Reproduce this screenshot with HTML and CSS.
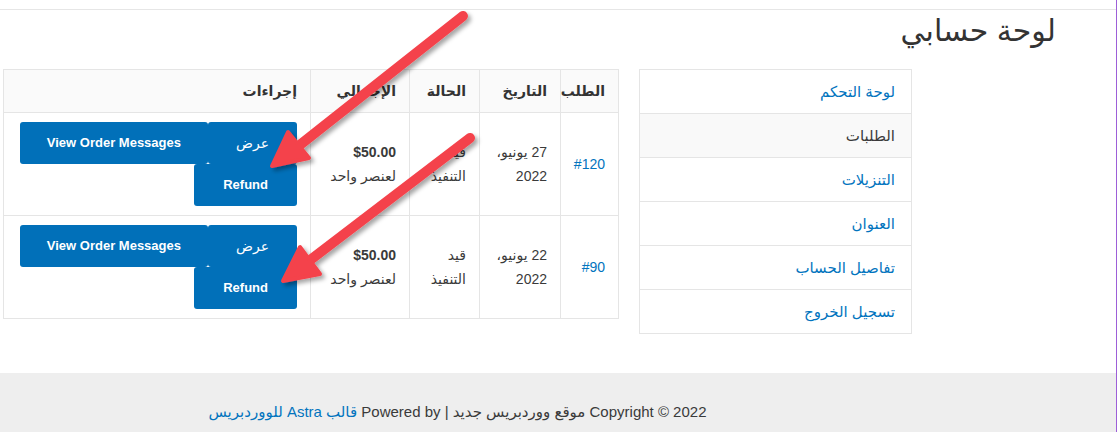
FILE: index.html
```html
<!DOCTYPE html>
<html lang="ar" dir="rtl">
<head>
    <meta charset="UTF-8">
    <meta name="viewport" content="width=device-width, initial-scale=1.0">
    <title>لوحة حسابي</title>
    <link rel="stylesheet" href="styles.css">
</head>
<body>
    <div class="page">
        <header class="site-header"></header>

        <main class="site-content">
            <h1 class="page-title">لوحة حسابي</h1>

            <div class="account">
                <nav class="account-nav">
                    <ul>
                        <li><a href="#">لوحة التحكم</a></li>
                        <li class="is-active"><a href="#">الطلبات</a></li>
                        <li><a href="#">التنزيلات</a></li>
                        <li><a href="#">العنوان</a></li>
                        <li><a href="#">تفاصيل الحساب</a></li>
                        <li><a href="#">تسجيل الخروج</a></li>
                    </ul>
                </nav>

                <div class="account-content">
                    <table class="orders">
                        <thead>
                            <tr>
                                <th class="col-number">الطلب</th>
                                <th class="col-date">التاريخ</th>
                                <th class="col-status">الحالة</th>
                                <th class="col-total">الإجمالي</th>
                                <th class="col-actions">إجراءات</th>
                            </tr>
                        </thead>
                        <tbody>
                            <tr>
                                <td><a href="#">#120</a></td>
                                <td class="nowrap">27 يونيو،<br>2022</td>
                                <td>قيد التنفيذ</td>
                                <td class="nowrap"><strong>$50.00</strong><br>لعنصر واحد</td>
                                <td class="actions">
                                    <div class="actions-wrap">
                                        <a href="#" class="button button-ar">عرض</a>
                                        <a href="#" class="button">View Order Messages</a>
                                        <a href="#" class="button button-refund">Refund</a>
                                    </div>
                                </td>
                            </tr>
                            <tr>
                                <td><a href="#">#90</a></td>
                                <td class="nowrap">22 يونيو،<br>2022</td>
                                <td>قيد التنفيذ</td>
                                <td class="nowrap"><strong>$50.00</strong><br>لعنصر واحد</td>
                                <td class="actions">
                                    <div class="actions-wrap">
                                        <a href="#" class="button button-ar">عرض</a>
                                        <a href="#" class="button">View Order Messages</a>
                                        <a href="#" class="button button-refund">Refund</a>
                                    </div>
                                </td>
                            </tr>
                        </tbody>
                    </table>
                </div>
            </div>
        </main>

        <footer class="site-footer">
            <div class="footer-inner">Copyright © 2022 موقع ووردبريس جديد | Powered by <a href="#">قالب Astra للووردبريس</a></div>
        </footer>

        <!-- annotation arrows drawn over the screenshot -->
        <svg class="arrows" viewBox="0 0 1117 432" width="1117" height="432">
            <defs>
                <filter id="shadow" x="-20%" y="-20%" width="140%" height="140%">
                    <feDropShadow dx="3" dy="3" stdDeviation="2" flood-color="#000" flood-opacity="0.35"/>
                </filter>
            </defs>
            <g class="arrow" filter="url(#shadow)">
                <line x1="463" y1="16" x2="296" y2="148" stroke-width="10"/>
                <polygon points="272,166 309,158 288,132" stroke-width="4"/>
            </g>
            <g class="arrow" filter="url(#shadow)">
                <line x1="470" y1="138" x2="305" y2="264" stroke-width="10"/>
                <polygon points="283,281 320,274 300,247" stroke-width="4"/>
            </g>
        </svg>
    </div>
</body>
</html>
```

FILE: styles.css
```css
* { box-sizing: border-box; }
body { margin: 0; font-family: "Liberation Sans", "DejaVu Sans", sans-serif; font-size: 14px; color: #3a3a3a; background: #fff; }
a { color: #0274be; text-decoration: none; }

.page { position: relative; height: 432px; overflow: hidden; border-right: 1px solid #9d5fd8; }
.site-header { height: 10px; border-bottom: 1px solid #e6e6e6; }
.site-content { padding-bottom: 39px; }
.page-title { margin: 3px 60px 20px 0; font-size: 30px; line-height: 36px; font-weight: normal; color: #333; }

.account { display: flex; gap: 20px; align-items: flex-start; margin: 0 204px 0 3px; }
.account-nav { flex: none; width: 273px; border: 1px solid #e5e5e5; }
.account-nav ul { list-style: none; margin: 0; padding: 0; }
.account-nav li + li { border-top: 1px solid #e5e5e5; }
.account-nav a { display: block; padding: 10px 16px; font-size: 15px; line-height: 23px; }
.account-nav .is-active { background: #f9f9f9; }
.account-nav .is-active a { color: #3a3a3a; }

.account-content { flex: 1; }
.orders { width: 100%; border-collapse: collapse; table-layout: fixed; border: 1px solid #e5e5e5; }
.orders th, .orders td { border: 1px solid #e5e5e5; padding: 9px 13px; text-align: right; vertical-align: middle; line-height: 24px; }
.orders thead th { background: #fafafa; font-weight: bold; color: #333; }
.orders .nowrap { white-space: nowrap; }
.col-number { width: 58px; }
.col-date { width: 81px; }
.col-status { width: 70px; }
.col-total { width: 99px; }
.orders td.actions { padding: 9px 13px 9px 6px; }

.actions-wrap { display: flex; flex-wrap: wrap; }
.button { display: inline-block; padding: 10px 27px; background: #0170b9; color: #fff; font-size: 13px; font-weight: bold; line-height: 22px; border-radius: 3px; white-space: nowrap; }
.button-ar { padding: 10px 28px; font-weight: normal; font-size: 14px; }
.button-refund { padding: 10px 29px; }

.site-footer { height: 59px; padding-top: 27px; background: #eeeeee; }
.footer-inner { margin: 0 204px 0 3px; text-align: center; font-size: 15px; line-height: 24px; }

.arrows { position: absolute; top: 0; left: 0; pointer-events: none; }
.arrow { fill: #f4434b; stroke: #f4434b; stroke-linecap: round; stroke-linejoin: round; }
```
